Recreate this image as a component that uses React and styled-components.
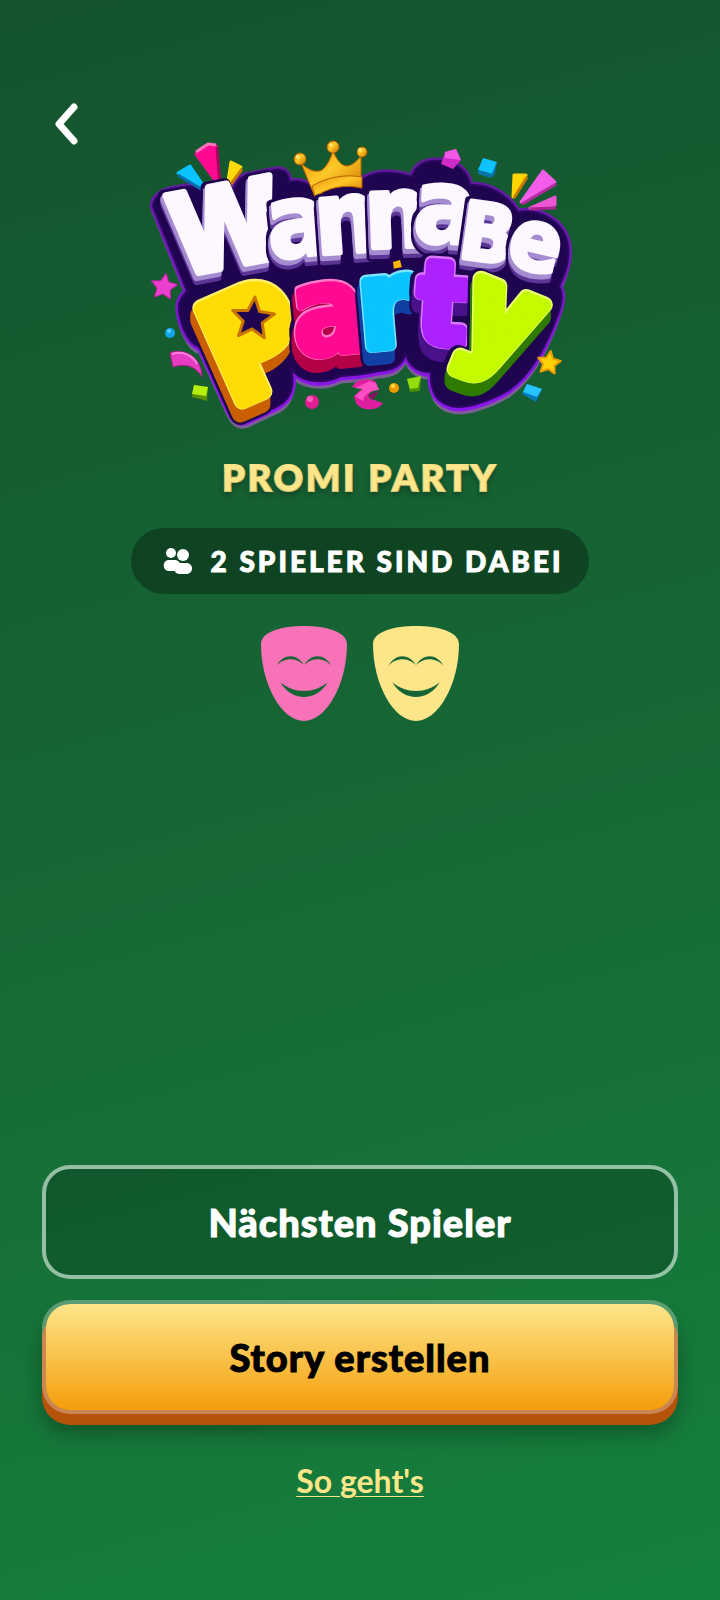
import React from 'react';
import styled, { createGlobalStyle, css } from 'styled-components';

const GlobalStyle = createGlobalStyle`
  *, *::before, *::after {
    box-sizing: border-box;
  }

  body {
    margin: 0;
    font-family: Lato, 'Open Sans', sans-serif;
  }
`;

const Screen = styled.div`
  display: flex;
  flex-direction: column;
  min-height: 100vh;
  padding: 96px 42px 100px;
  background: linear-gradient(165deg, #14532d 0%, #166534 45%, #15803d 100%);
`;

const Header = styled.header`
  display: flex;
  height: 34px;
`;

const BackButton = styled.button`
  width: 48px;
  height: 56px;
  padding: 0;
  border: none;
  background: none;
  cursor: pointer;

  svg {
    display: block;
  }
`;

const Main = styled.main`
  display: flex;
  flex: 1;
  flex-direction: column;
  align-items: center;
`;

const LogoImage = styled.svg`
  display: block;
  width: 440px;
  max-width: 100%;
  height: auto;
  overflow: visible;
`;

const Title = styled.h1`
  margin: 21px 0 30px;
  color: #fde68a;
  font-size: 36px;
  font-weight: 900;
  line-height: 42px;
  letter-spacing: 3px;
  text-transform: uppercase;
  text-shadow: 0 4px 6px rgba(0, 0, 0, 0.35);
  -webkit-text-stroke: 2px #fde68a;
  paint-order: stroke fill;
`;

const PlayerCount = styled.div`
  display: flex;
  align-items: center;
  gap: 18px;
  height: 66px;
  padding: 0 26px 0 32px;
  border-radius: 33px;
  background: rgba(0, 0, 0, 0.3);
  color: #fff;
  font-size: 28px;
  font-weight: 900;
  line-height: 32px;
  letter-spacing: 3px;
  text-transform: uppercase;
  -webkit-text-stroke: 1px #fff;
`;

const Masks = styled.ul`
  display: flex;
  gap: 26px;
  margin: 32px 0 0;
  padding: 0;
  list-style: none;

  svg {
    display: block;
  }
`;

const Actions = styled.footer`
  display: flex;
  flex-direction: column;
  gap: 21px;
  isolation: isolate;
`;

const primary = css`
  border-color: rgba(255, 255, 255, 0.3);
  background: linear-gradient(#fde68a, #f59e0b) padding-box;
  color: #000;
  -webkit-text-stroke-color: #000;

  &::before {
    content: '';
    position: absolute;
    z-index: -1;
    inset: 7px -4px -15px;
    border-radius: 28px;
    background: #b45309;
    box-shadow: 0 8px 20px rgba(0, 0, 0, 0.3);
  }
`;

const ActionButton = styled.button`
  position: relative;
  width: 100%;
  height: 114px;
  border: 4px solid rgba(255, 255, 255, 0.55);
  border-radius: 28px;
  background: rgba(0, 0, 0, 0.2) padding-box;
  color: #fff;
  font: inherit;
  font-size: 38px;
  font-weight: 900;
  letter-spacing: 1px;
  -webkit-text-stroke: 1px #fff;
  cursor: pointer;

  ${({ $primary }) => $primary && primary}
`;

const HelpLink = styled.a`
  align-self: center;
  margin-top: 27px;
  color: #fde68a;
  font-size: 32px;
  font-weight: 700;
  line-height: 38px;
  text-decoration: underline;
  text-decoration-thickness: 1px;
  text-underline-offset: 3px;
`;

const LogoText = styled.text`
  font-family: 'Liberation Sans Narrow', 'DejaVu Sans Condensed', sans-serif;
  font-weight: 700;
  text-anchor: middle;
  stroke-linejoin: round;
`;

const wannabe = [
  { char: 'W', x: 233, y: 266, size: 112, turn: -11, weight: 7 },
  { char: 'a', x: 301, y: 256, size: 102, turn: -6, weight: 4 },
  { char: 'n', x: 349, y: 252, size: 100, turn: -4, weight: 5 },
  { char: 'n', x: 398, y: 247, size: 100, turn: -2, weight: 5 },
  { char: 'a', x: 444, y: 243, size: 104, turn: 3, weight: 4 },
  { char: 'B', x: 484, y: 261, size: 80, turn: 8, weight: 4 },
  { char: 'e', x: 530, y: 270, size: 86, turn: 13, weight: 4 },
];

const party = [
  { char: 'P', x: 274, y: 387, size: 140, turn: -24, weight: 17, fill: '#ffdc05', side: '#c95f00', shine: '#ffef6b' },
  { char: 'a', x: 333, y: 352, size: 122, turn: -6, weight: 10, fill: '#ff0a91', side: '#b30046', shine: '#ff79c8' },
  { char: 'r', x: 389, y: 345, size: 120, turn: -5, weight: 13, fill: '#0bc3ff', side: '#123fa3', shine: '#7be6ff' },
  { char: 't', x: 440, y: 342, size: 112, turn: 4, weight: 14, fill: '#ad20ff', side: '#4a128a', shine: '#d878ff' },
  { char: 'y', x: 488, y: 354, size: 122, turn: 22, weight: 17, fill: '#c3fa00', side: '#2f7a00', shine: '#eaff70' },
];

const outline =
  'M153 206 C154 194 166 190 180 188 C194 184 201 189 207 198 C216 196 226 194 233 193 C235 182 240 176 250 175 L275 170 C285 168 289 175 289 182 C299 180 306 182 313 188 L365 178 C376 172 392 171 412 177 C416 164 427 160 441 161 C458 162 468 173 470 185 C490 184 508 196 518 212 C538 208 561 220 567 240 C571 258 566 272 559 286 C563 293 563 301 558 314 C548 342 533 373 509 390 C489 402 461 411 448 405 C436 401 430 391 431 372 C420 373 409 367 406 354 C401 366 394 370 378 371 C363 375 353 375 341 376 C321 386 298 381 291 368 C296 390 289 401 276 407 L248 420 C240 423 234 421 229 411 L200 347 C187 344 178 319 179 304 C181 296 185 294 187 291 Z';

const starPoints = (cx, cy, outer, inner, turn) =>
  Array.from({ length: 10 }, (_, i) => {
    const radius = i % 2 ? inner : outer;
    const angle = ((i * 36 + turn - 90) * Math.PI) / 180;
    return `${cx + radius * Math.cos(angle)},${cy + radius * Math.sin(angle)}`;
  }).join(' ');

const Letter = ({ char, x, y, size, turn, weight, fill = '#fdf8ff', side = '#5b3696', mid, shine, depth = 9 }) => {
  const layers = [
    { dy: depth, color: '#1f0450', extra: 5 },
    { dy: 0, color: '#1f0450', extra: 5 },
    { dy: depth, color: side },
    { dy: depth - 2, color: side },
    { dy: depth - 4, color: mid || side },
    { dy: depth - 6, color: mid || side },
  ];

  return (
    <g fontSize={size}>
      {layers.map(({ dy, color, extra = 0 }, i) => (
        <LogoText
          key={i}
          aria-hidden="true"
          transform={`translate(${x - 2} ${y + dy}) rotate(${turn})`}
          fill={color}
          stroke={color}
          strokeWidth={weight + extra}
        >
          {char}
        </LogoText>
      ))}
      {shine && (
        <LogoText
          aria-hidden="true"
          transform={`translate(${x} ${y}) rotate(${turn})`}
          fill={shine}
          stroke={shine}
          strokeWidth={weight}
        >
          {char}
        </LogoText>
      )}
      <LogoText
        transform={`translate(${x} ${y + (shine ? 1 : 0)}) rotate(${turn})`}
        fill={fill}
        stroke={fill}
        strokeWidth={shine ? weight - 3 : weight}
      >
        {char}
      </LogoText>
    </g>
  );
};

const Logo = () => (
  <LogoImage viewBox="140 130 440 305" role="img" aria-label="WannaBe Party">
    <defs>
      <linearGradient id="gold" x1="0" y1="0" x2="1" y2="1">
        <stop offset="0" stopColor="#e98a06" />
        <stop offset="0.45" stopColor="#ffc928" />
        <stop offset="1" stopColor="#c76a00" />
      </linearGradient>
      <linearGradient id="rim" x1="0" y1="0" x2="0" y2="1">
        <stop offset="0" stopColor="#5d1c96" />
        <stop offset="1" stopColor="#8f16ee" />
      </linearGradient>
    </defs>

    {/* plate behind the words */}
    <path d={outline} transform="translate(0 6)" fill="#8f16ee" stroke="#7a5f92" strokeWidth="3" />
    <path d={outline} fill="#1f0450" stroke="url(#rim)" strokeWidth="7" strokeLinejoin="round" />
    <path d={outline} fill="#1f0450" stroke="#2c0862" strokeWidth="2" strokeLinejoin="round" />

    {/* bursts */}
    <g strokeLinejoin="round" strokeWidth="3">
      <path d="M196 154 L208 145 L216 146 L220 187 Z" fill="#ff0a91" stroke="#ff0a91" />
      <path d="M196 152 L208 144 L216 145" fill="none" stroke="#ff73bf" />
      <path d="M217 147 L220 187" fill="none" stroke="#a5075c" />
      <path d="M178 173 L190 166 L207 191 Z" fill="#0bc3ff" stroke="#0bc3ff" />
      <path d="M178 175 L206 192" fill="none" stroke="#066fae" />
      <path d="M231 162 L241 167 L227 187 Z" fill="#ffd90a" stroke="#ffd90a" />
      <path d="M242 169 L228 188" fill="none" stroke="#c87800" />
      <path d="M514 175 L526 175 L513 197 Z" fill="#ffd400" stroke="#ffd400" />
      <path d="M527 177 L514 198" fill="none" stroke="#c97900" />
      <path d="M543 171 L555 182 L521 202 Z" fill="#f35de9" stroke="#f35de9" />
      <path d="M556 184 L522 204" fill="none" stroke="#b52ba0" />
      <path d="M555 197 L555 205 L530 208 Z" fill="#ed55d4" stroke="#ed55d4" />
      <path d="M556 208 L530 209" fill="none" stroke="#a92391" />
    </g>

    {/* confetti */}
    <path d="M445 152 L456 149 L461 160 L453 169 L441 164 Z" fill="#ce2bc8" />
    <path d="M445 152 L456 149 L461 160 L445 158 Z" fill="#f158e5" />
    <path d="M483 158 L497 162 L492 174 L478 170 Z" fill="#10c2ff" />
    <path d="M478 170 L492 174 L497 162 L495 174 L491 178 L478 174 Z" fill="#0874a9" />
    <polygon points={starPoints(164, 287, 14, 7, 8)} fill="#ec3fd0" stroke="#b91fa0" />
    <circle cx="170" cy="333" r="5" fill="#11a5ee" />
    <circle cx="169" cy="331" r="2" fill="#57cfff" />
    <path d="M170 353 C184 347 202 357 202 377 C198 370 190 362 173 367 Z" fill="#e53cc1" stroke="#a91a86" />
    <path d="M172 354 C184 350 194 357 197 364" fill="none" stroke="#ff7edf" strokeWidth="2" />
    <path d="M194 385 L208 387 L207 401 L192 397 Z" fill="#5c9000" />
    <path d="M194 385 L208 387 L206 396 L192 394 Z" fill="#b8ee0b" />
    <circle cx="312" cy="402" r="7" fill="#e01d91" />
    <circle cx="310" cy="399" r="3" fill="#ff64bc" />
    <path d="M352 387 C356 379 366 378 375 381 L379 390 C372 389 365 395 371 399 L383 403 C378 411 362 412 356 403 L354 396 L362 389 Z" fill="#e01fa0" />
    <path d="M355 388 L370 381 L376 383 L379 390 C371 390 364 394 363 401 L355 396 L363 389 Z" fill="#ff4fc4" />
    <path d="M368 395 L379 391 L373 400 Z" fill="#881061" />
    <circle cx="394" cy="388" r="5" fill="#f19a00" />
    <circle cx="393" cy="386" r="2" fill="#ffdf48" />
    <path d="M407 379 L421 376 L420 391 L410 392 Z" fill="#4d9200" />
    <path d="M407 379 L421 376 L418 388 L410 389 Z" fill="#93dc10" />
    <polygon points={starPoints(549, 363, 12, 6, 8)} fill="#ffd20a" stroke="#f0a000" strokeWidth="2" strokeLinejoin="round" />
    <path d="M527 384 L542 389 L536 402 L522 394 Z" fill="#0879b7" />
    <path d="M527 384 L542 389 L537 397 L523 392 Z" fill="#25c4ff" />

    {/* crown */}
    <g fill="url(#gold)" stroke="#b86200" strokeLinejoin="round">
      <path d="M301 163 C310 172 319 173 323 169 C328 165 331 157 333 151 C336 158 340 165 346 166 C352 166 357 161 361 156 L361 188 C345 184 328 187 315 197 Z" />
      <circle cx="300" cy="159" r="6" />
      <circle cx="333" cy="147" r="6" />
      <circle cx="362" cy="152" r="5" />
      <path d="M312 186 C327 177 346 174 362 177 L362 188 C346 184 328 187 315 197 Z" />
    </g>
    <circle cx="298" cy="157" r="2" fill="#ffe373" />
    <circle cx="331" cy="145" r="2" fill="#ffe373" />
    <circle cx="360" cy="150" r="2" fill="#ffe373" />

    {wannabe.map((letter, i) => (
      <Letter key={i} {...letter} mid="#a58bd0" />
    ))}
    <path d="M393 262 L400 260 L402 268 L394 270 Z" fill="#ffb800" />
    {party.map((letter) => (
      <Letter key={letter.char} {...letter} depth={13} />
    ))}

    {/* star cut into the P */}
    <circle cx="255" cy="318" r="23" fill="#ffdc05" />
    <polygon points={starPoints(253, 319, 22, 10, 5)} fill="#1f0450" stroke="#c97400" strokeWidth="3" strokeLinejoin="round" />
  </LogoImage>
);

const PlayersIcon = () => (
  <svg width="30" height="28" viewBox="0 0 30 28" fill="#fff" aria-hidden="true">
    <circle cx="8" cy="6" r="5" />
    <circle cx="20" cy="8" r="6" />
    <path d="M6 13 H12 C14 13 17 15 17 17 L13 24 H6 C-1 24 -1 13 6 13 Z" />
    <path d="M17 16 H23 C31 16 31 27 23 27 H17 C9 27 9 16 17 16 Z" />
  </svg>
);

const Mask = ({ color }) => (
  <svg width="86" height="95" viewBox="0 0 258 285" role="img" aria-label="Spieler">
    <path
      fill={color}
      fillRule="evenodd"
      d="M0 54 C0 16 66 0 129 0 C192 0 258 16 258 54 C258 175 196 285 129 285 C62 285 0 175 0 54 Z M47 119 C66 96 104 92 129 117 C154 92 192 96 211 119 C192 83 151 80 129 117 C107 80 66 83 47 119 Z M58 169 C92 228 166 228 200 169 C160 204 98 204 58 169 Z"
    />
  </svg>
);

const maskColors = ['#f772b6', '#fde68a'];

const App = () => (
  <>
    <GlobalStyle />
    <Screen>
      <Header>
        <BackButton type="button" aria-label="Zurück">
          <svg width="48" height="56" viewBox="0 0 48 56" fill="none" aria-hidden="true">
            <path d="M32 11 L17 28 L32 45" stroke="#fff" strokeWidth="7" strokeLinecap="round" strokeLinejoin="round" />
          </svg>
        </BackButton>
      </Header>
      <Main>
        <Logo />
        <Title>Promi Party</Title>
        <PlayerCount>
          <PlayersIcon />
          <span>2 Spieler sind dabei</span>
        </PlayerCount>
        <Masks>
          {maskColors.map((color) => (
            <li key={color}>
              <Mask color={color} />
            </li>
          ))}
        </Masks>
      </Main>
      <Actions>
        <ActionButton type="button">Nächsten Spieler</ActionButton>
        <ActionButton type="button" $primary>
          Story erstellen
        </ActionButton>
        <HelpLink href="#hilfe">So geht's</HelpLink>
      </Actions>
    </Screen>
  </>
);

export default App;
